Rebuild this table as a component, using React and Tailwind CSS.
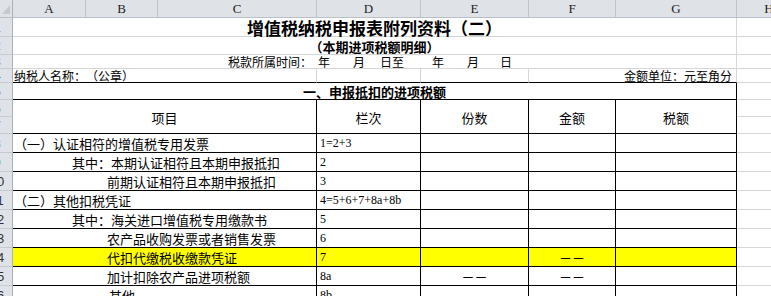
import React from "react";

// Excel-like sheet: 增值税纳税申报表附列资料（二）

const RowHead = ({ n }) => (
  <div className="w-[13px] shrink-0 self-stretch overflow-hidden flex items-center bg-[#dfe3e8] border-r border-b border-r-[#aab1b9] border-b-[#c6cbd1]">
    <div className="w-[30px] shrink-0 -ml-[18px] text-center text-[13px] leading-none text-[#333] font-['Liberation_Sans',sans-serif]">
      {n}
    </div>
  </div>
);

const HCell = () => (
  <div className="w-[64px] shrink-0 self-stretch border-b border-[#d6d6d6]" />
);

const Dash = () => <span className="text-[13px] leading-none">－－</span>;

const bodyRows = [
  { n: 8, label: "（一）认证相符的增值税专用发票", pl: "pl-[1px]", code: "1=2+3" },
  { n: 9, label: "其中：本期认证相符且本期申报抵扣", pl: "pl-[59px]", code: "2" },
  { n: 10, label: "前期认证相符且本期申报抵扣", pl: "pl-[94px]", code: "3" },
  { n: 11, label: "（二）其他扣税凭证", pl: "pl-[1px]", code: "4=5+6+7+8a+8b" },
  { n: 12, label: "其中：海关进口增值税专用缴款书", pl: "pl-[59px]", code: "5" },
  { n: 13, label: "农产品收购发票或者销售发票", pl: "pl-[94px]", code: "6" },
  { n: 14, label: "代扣代缴税收缴款凭证", pl: "pl-[94px]", code: "7", f: true, hl: true },
  { n: 15, label: "加计扣除农产品进项税额", pl: "pl-[94px]", code: "8a", e: true, f: true },
  { n: 16, label: "其他", pl: "pl-[96px]", code: "8b" },
];

const BodyRow = ({ n, label, pl, code, e, f, hl }) => {
  const bg = hl ? "bg-[#ffff00]" : "bg-white";
  const cell = `shrink-0 flex items-center border-r border-b border-black ${bg}`;
  return (
    <div className="flex h-[19px] shrink-0">
      <RowHead n={n} />
      <div className={`w-[304px] whitespace-nowrap text-[13px] leading-none ${pl} ${cell}`}>
        {label}
      </div>
      <div className={`w-[104px] pl-[3px] text-[12px] leading-none font-['Liberation_Serif',serif] ${cell}`}>
        {code}
      </div>
      <div className={`w-[108px] justify-center ${cell}`}>{e && <Dash />}</div>
      <div className={`w-[87px] justify-center ${cell}`}>{f && <Dash />}</div>
      <div className={`w-[121px] ${cell}`} />
      <HCell />
    </div>
  );
};

const letters = [
  ["A", "w-[73px]"],
  ["B", "w-[72px]"],
  ["C", "w-[159px]"],
  ["D", "w-[104px]"],
  ["E", "w-[108px]"],
  ["F", "w-[87px]"],
  ["G", "w-[121px]"],
];

export default function App() {
  return (
    <div className="w-[771px] h-[296px] overflow-hidden bg-white text-black font-['Noto_Sans_CJK_SC',sans-serif] [text-spacing-trim:space-all] flex flex-col">
      {/* column header */}
      <div className="flex h-[18px] shrink-0 bg-[#dfe3e8] border-b border-[#b9bfc6] font-['Liberation_Serif',serif] text-[13px] leading-none text-[#222]">
        <div className="w-[13px] shrink-0 border-r border-[#aab1b9] relative">
          <svg className="absolute left-[2px] top-[5px]" width="8" height="9" viewBox="0 0 8 9">
            <polygon points="8,0 8,9 0,9" fill="#c4c9cf" />
          </svg>
        </div>
        {letters.map(([l, w]) => (
          <div key={l} className={`${w} shrink-0 flex items-center justify-center border-r border-[#c0c5cb]`}>
            {l}
          </div>
        ))}
        <div className="w-[64px] shrink-0 flex items-center justify-center">H</div>
      </div>

      {/* row 1: title */}
      <div className="flex h-[19px] shrink-0">
        <RowHead n={1} />
        <div className="w-[724px] shrink-0 flex items-center justify-center pt-[1px] border-r border-b border-[#d6d6d6] text-[17px] font-bold leading-none whitespace-nowrap">
          增值税纳税申报表附列资料（二）
        </div>
        <HCell />
      </div>

      {/* row 2: subtitle */}
      <div className="flex h-[18px] shrink-0">
        <RowHead n={2} />
        <div className="w-[724px] shrink-0 flex items-center justify-center pt-[1px] border-r border-b border-[#d6d6d6] text-[13px] font-bold leading-none whitespace-nowrap">
          （本期进项税额明细）
        </div>
        <HCell />
      </div>

      {/* row 3: period */}
      <div className="flex h-[14px] shrink-0">
        <RowHead n={3} />
        <div className="w-[724px] shrink-0 flex items-center border-r border-b border-[#d6d6d6] text-[12px] leading-none whitespace-nowrap">
          <div className="w-[304px] shrink-0 flex justify-end pr-[5px]">税款所属时间：</div>
          <span className="ml-[1px]">年</span>
          <span className="ml-[23px]">月</span>
          <span className="ml-[15px]">日至</span>
          <span className="ml-[28px]">年</span>
          <span className="ml-[23px]">月</span>
          <span className="ml-[21px]">日</span>
        </div>
        <HCell />
      </div>

      {/* row 4: taxpayer / unit */}
      <div className="flex h-[14px] shrink-0 text-[12px] leading-none whitespace-nowrap">
        <RowHead n={4} />
        <div className="w-[304px] shrink-0 flex items-center pl-[1px] border-r border-b border-r-[#d6d6d6] border-b-black">
          <span className="underline underline-offset-[1px]">纳税人名称：（公章）</span>
        </div>
        <div className="w-[104px] shrink-0 border-r border-b border-r-[#d6d6d6] border-b-black" />
        <div className="w-[108px] shrink-0 border-r border-b border-r-[#d6d6d6] border-b-black" />
        <div className="w-[208px] shrink-0 flex items-center justify-end pr-[4px] border-r border-b border-r-[#d6d6d6] border-b-black">
          <span className="underline underline-offset-[1px]">金额单位：元至角分</span>
        </div>
        <HCell />
      </div>

      {/* row 5: section */}
      <div className="flex h-[17px] shrink-0">
        <RowHead n={5} />
        <div className="w-[724px] shrink-0 flex items-center justify-center border-r border-b border-black text-[13px] font-bold leading-none whitespace-nowrap">
          一、申报抵扣的进项税额
        </div>
        <HCell />
      </div>

      {/* rows 6-7: table head */}
      <div className="flex h-[34px] shrink-0 text-[13px] leading-none">
        <div className="w-[13px] shrink-0 flex flex-col">
          <div className="h-[17px] flex"><RowHead n={6} /></div>
          <div className="h-[17px] flex"><RowHead n={7} /></div>
        </div>
        <div className="w-[304px] shrink-0 flex items-center justify-center pt-[1px] border-r border-b border-black">项目</div>
        <div className="w-[104px] shrink-0 flex items-center justify-center pt-[1px] border-r border-b border-black">栏次</div>
        <div className="w-[108px] shrink-0 flex items-center justify-center pt-[1px] border-r border-b border-black">份数</div>
        <div className="w-[87px] shrink-0 flex items-center justify-center pt-[1px] border-r border-b border-black">金额</div>
        <div className="w-[121px] shrink-0 flex items-center justify-center pt-[1px] border-r border-b border-black">税额</div>
        <div className="w-[64px] shrink-0 flex flex-col">
          <div className="h-[17px] border-b border-[#d6d6d6]" />
          <div className="h-[17px] border-b border-[#d6d6d6]" />
        </div>
      </div>

      {bodyRows.map((r) => (
        <BodyRow key={r.n} {...r} />
      ))}
    </div>
  );
}
